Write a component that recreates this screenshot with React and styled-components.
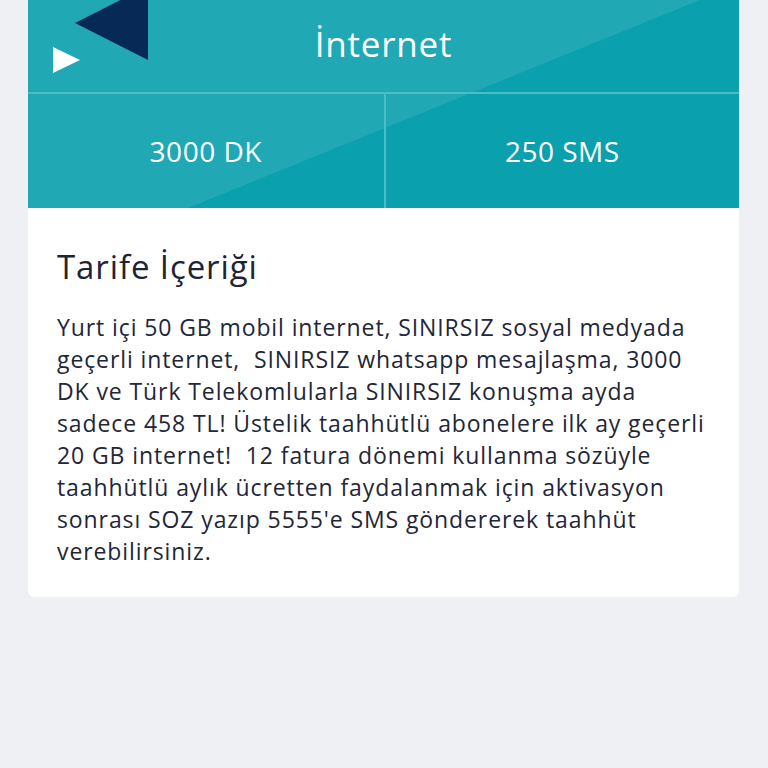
import styled, { createGlobalStyle } from "styled-components";

const GlobalStyle = createGlobalStyle`
  html, body {
    margin: 0;
    padding: 0;
    background: #eff0f4;
    font-family: "Open Sans", "Noto Sans", sans-serif;
  }
`;

const Page = styled.main`
  width: 768px;
  height: 768px;
  padding: 0 29px 0 28px;
  box-sizing: border-box;
  background: #eff0f4;
`;

const Card = styled.section`
  display: flex;
  flex-direction: column;
  background: white;
  border-radius: 0 0 6px 6px;
  overflow: hidden;
`;

const Banner = styled.div`
  position: relative;
  background: #0aa0ad;
  color: white;

  &::before {
    content: "";
    position: absolute;
    inset: 0;
    background: #20a8b4;
    clip-path: polygon(0 0, 672px 0, 160px 208px, 0 208px);
  }
`;

const TitleRow = styled.div`
  position: relative;
  display: flex;
  align-items: center;
  justify-content: center;
  height: 94px;
  border-bottom: 2px solid #4cbdc6;
  font-size: 35px;
  letter-spacing: 0.8px;
  padding-bottom: 6px;
  box-sizing: border-box;
`;

const Deco = styled.svg`
  position: absolute;
  left: 0;
  top: 0;
`;

const Stats = styled.div`
  position: relative;
  display: grid;
  grid-template-columns: 1fr 1fr;
  height: 114px;
`;

const Stat = styled.div`
  display: flex;
  align-items: center;
  justify-content: center;
  font-size: 28px;
  letter-spacing: 0.5px;
  border-left: ${(p) => (p.$divided ? "2px solid #4cbdc6" : "none")};
`;

const Body = styled.div`
  padding: 36px 25px 30px 29px;
  color: #1e2336;
`;

const Heading = styled.h2`
  margin: 0 0 21px;
  font-size: 33px;
  font-weight: 400;
  line-height: 46px;
  letter-spacing: 0.9px;
`;

const Text = styled.p`
  margin: 0;
  font-size: 23px;
  line-height: 32px;
  letter-spacing: 0.9px;
  color: #222639;
`;

export default function App() {
  return (
    <>
      <GlobalStyle />
      <Page>
        <Card>
          <Banner>
            <TitleRow>
              <Deco width="130" height="80" viewBox="0 0 130 80">
                <polygon points="47,23 120,-14 120,60" fill="#062a55" />
                <polygon points="25,47 25,73 52,60" fill="#ffffff" />
              </Deco>
              İnternet
            </TitleRow>
            <Stats>
              <Stat>3000 DK</Stat>
              <Stat $divided>250 SMS</Stat>
            </Stats>
          </Banner>
          <Body>
            <Heading>Tarife İçeriği</Heading>
            <Text>
              Yurt içi 50 GB mobil internet, SINIRSIZ sosyal medyada geçerli
              internet,&nbsp; SINIRSIZ whatsapp mesajlaşma, 3000 DK ve Türk
              Telekomlularla SINIRSIZ konuşma ayda sadece 458 TL! Üstelik
              taahhütlü abonelere ilk ay geçerli 20 GB internet!&nbsp; 12 fatura
              dönemi kullanma sözüyle taahhütlü aylık ücretten faydalanmak için
              aktivasyon sonrası SOZ yazıp 5555'e SMS göndererek taahhüt
              verebilirsiniz.
            </Text>
          </Body>
        </Card>
      </Page>
    </>
  );
}
